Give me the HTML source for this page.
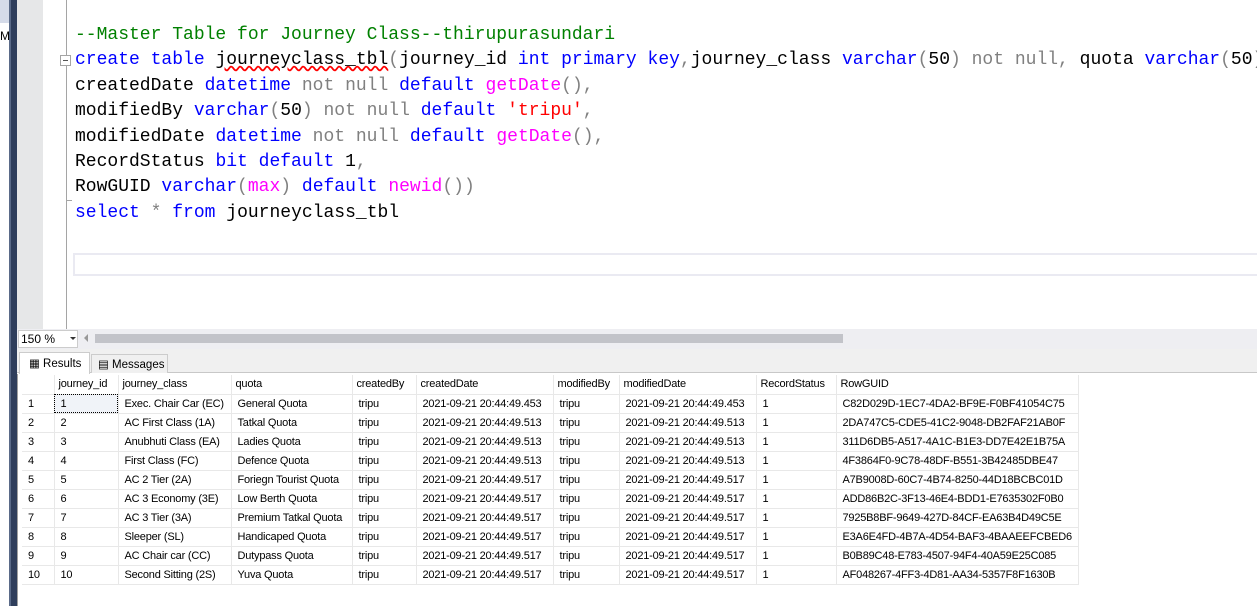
<!DOCTYPE html>
<html><head><style>
*{margin:0;padding:0;box-sizing:border-box}
body{width:1257px;height:606px;overflow:hidden;background:#fff;position:relative;font-family:"Liberation Sans",sans-serif}
.a{position:absolute}
.code{position:absolute;left:75px;font-family:"Liberation Mono",monospace;font-size:18px;white-space:pre;line-height:25.4px}
.k{color:#0000ff}.g{color:#808080}.m{color:#ff00ff}.r{color:#ff0000}.c{color:#008000}
.grid{position:absolute;left:22px;top:375px;border-collapse:collapse;font-size:11px;font-family:"Liberation Sans",sans-serif;letter-spacing:-0.2px}
.grid td{height:19px;border-right:1px solid #e8e8e8;border-bottom:1px solid #e8e8e8;padding:0 0 0 6px;white-space:nowrap;color:#000}
.grid tr:first-child td{padding-left:4px}
</style></head><body>
<div class="a" style="left:0;top:0;width:9px;height:23px;background:#d5dbe9"></div>
<div class="a" style="left:0;top:29px;font-size:12px">M.</div>
<div class="a" style="left:9px;top:0;width:2px;height:606px;background:#5a6a88"></div>
<div class="a" style="left:11px;top:0;width:6px;height:606px;background:#2f3e5c"></div>
<div class="a" style="left:17px;top:0;width:26px;height:329px;background:#e6e7e8"></div>
<div class="a" style="left:66px;top:0;width:1px;height:329px;background:#a5a5a5"></div>
<div class="a" style="left:60px;top:55px;width:11px;height:11px;border:1px solid #a5a5a5;background:#fff"></div>
<div class="a" style="left:63px;top:60px;width:5px;height:1px;background:#555"></div>
<div class="a" style="left:66px;top:200px;width:6px;height:1px;background:#a5a5a5"></div>
<div class="a" style="left:73px;top:253px;width:1190px;height:23px;border:2px solid #eaeaf2;border-right:none"></div>
<div class="code" style="top:23px"><span class="c">--Master Table for Journey Class--thirupurasundari</span>
<span class="k">create table</span> <span style="text-decoration:underline wavy #f00">journeyclass_tbl</span><span class="g">(</span>journey_id <span class="k">int primary key</span><span class="g">,</span>journey_class <span class="k">varchar</span><span class="g">(</span>50<span class="g">) not null,</span> quota <span class="k">varchar</span><span class="g">(</span>50<span class="g">),</span>
createdDate <span class="k">datetime</span> <span class="g">not null</span> <span class="k">default</span> <span class="m">getDate</span><span class="g">(),</span>
modifiedBy <span class="k">varchar</span><span class="g">(</span>50<span class="g">) not null</span> <span class="k">default</span> <span class="r">'tripu'</span><span class="g">,</span>
modifiedDate <span class="k">datetime</span> <span class="g">not null</span> <span class="k">default</span> <span class="m">getDate</span><span class="g">(),</span>
RecordStatus <span class="k">bit default</span> 1<span class="g">,</span>
RowGUID <span class="k">varchar</span><span class="g">(</span><span class="m">max</span><span class="g">)</span> <span class="k">default</span> <span class="m">newid</span><span class="g">())</span>
<span class="k">select</span> <span class="g">*</span> <span class="k">from</span> journeyclass_tbl</div>
<div class="a" style="left:17px;top:329px;width:1240px;height:20px;background:#eeeef2"></div>
<div class="a" style="left:18px;top:330px;width:60px;height:18px;background:#fff;border:1px solid #ccc;font-size:12px;padding:1px 2px">150 %</div>
<div class="a" style="left:70px;top:337px;width:0;height:0;border-left:3px solid transparent;border-right:3px solid transparent;border-top:3px solid #333"></div>
<div class="a" style="left:84px;top:334px;width:0;height:0;border-top:4px solid transparent;border-bottom:4px solid transparent;border-right:4px solid #999"></div>
<div class="a" style="left:95px;top:334px;width:748px;height:9px;background:#c2c3c9"></div>
<div class="a" style="left:17px;top:349px;width:1240px;height:24px;background:#f0f0f0;border-bottom:1px solid #c8c8c8"></div>
<div class="a" style="left:19px;top:352px;width:71px;height:22px;background:#fff;border:1px solid #ccc;border-bottom:none;font-size:11.5px;padding:3px 0 0 9px">▦ Results</div>
<div class="a" style="left:91px;top:354px;width:77px;height:19px;border:1px solid #ccc;border-bottom:none;font-size:11.5px;padding:2px 0 0 6px;background:#f0f0f0">▤ Messages</div>
<div class="a" style="left:17px;top:374px;width:1240px;height:232px;background:#fff;border-left:1px solid #a0a0a0"></div>
<table class="grid">
<tr><td style="width:32px"></td><td style="width:64px">journey_id</td><td style="width:113px">journey_class</td><td style="width:121px">quota</td><td style="width:64px">createdBy</td><td style="width:137px">createdDate</td><td style="width:66px">modifiedBy</td><td style="width:137px">modifiedDate</td><td style="width:80px">RecordStatus</td><td style="width:242px">RowGUID</td></tr>
<tr><td>1</td><td style="outline:1px dotted #000;outline-offset:-1px;background:#f0f3f8">1</td><td>Exec. Chair Car (EC)</td><td>General Quota</td><td>tripu</td><td>2021-09-21 20:44:49.453</td><td>tripu</td><td>2021-09-21 20:44:49.453</td><td>1</td><td>C82D029D-1EC7-4DA2-BF9E-F0BF41054C75</td></tr>
<tr><td>2</td><td>2</td><td>AC First Class (1A)</td><td>Tatkal Quota</td><td>tripu</td><td>2021-09-21 20:44:49.513</td><td>tripu</td><td>2021-09-21 20:44:49.513</td><td>1</td><td>2DA747C5-CDE5-41C2-9048-DB2FAF21AB0F</td></tr>
<tr><td>3</td><td>3</td><td>Anubhuti Class (EA)</td><td>Ladies Quota</td><td>tripu</td><td>2021-09-21 20:44:49.513</td><td>tripu</td><td>2021-09-21 20:44:49.513</td><td>1</td><td>311D6DB5-A517-4A1C-B1E3-DD7E42E1B75A</td></tr>
<tr><td>4</td><td>4</td><td>First Class (FC)</td><td>Defence Quota</td><td>tripu</td><td>2021-09-21 20:44:49.513</td><td>tripu</td><td>2021-09-21 20:44:49.513</td><td>1</td><td>4F3864F0-9C78-48DF-B551-3B42485DBE47</td></tr>
<tr><td>5</td><td>5</td><td>AC 2 Tier (2A)</td><td>Foriegn Tourist Quota</td><td>tripu</td><td>2021-09-21 20:44:49.517</td><td>tripu</td><td>2021-09-21 20:44:49.517</td><td>1</td><td>A7B9008D-60C7-4B74-8250-44D18BCBC01D</td></tr>
<tr><td>6</td><td>6</td><td>AC 3 Economy (3E)</td><td>Low Berth Quota</td><td>tripu</td><td>2021-09-21 20:44:49.517</td><td>tripu</td><td>2021-09-21 20:44:49.517</td><td>1</td><td>ADD86B2C-3F13-46E4-BDD1-E7635302F0B0</td></tr>
<tr><td>7</td><td>7</td><td>AC 3 Tier (3A)</td><td>Premium Tatkal Quota</td><td>tripu</td><td>2021-09-21 20:44:49.517</td><td>tripu</td><td>2021-09-21 20:44:49.517</td><td>1</td><td>7925B8BF-9649-427D-84CF-EA63B4D49C5E</td></tr>
<tr><td>8</td><td>8</td><td>Sleeper (SL)</td><td>Handicaped Quota</td><td>tripu</td><td>2021-09-21 20:44:49.517</td><td>tripu</td><td>2021-09-21 20:44:49.517</td><td>1</td><td>E3A6E4FD-4B7A-4D54-BAF3-4BAAEEFCBED6</td></tr>
<tr><td>9</td><td>9</td><td>AC Chair car (CC)</td><td>Dutypass Quota</td><td>tripu</td><td>2021-09-21 20:44:49.517</td><td>tripu</td><td>2021-09-21 20:44:49.517</td><td>1</td><td>B0B89C48-E783-4507-94F4-40A59E25C085</td></tr>
<tr><td>10</td><td>10</td><td>Second Sitting (2S)</td><td>Yuva Quota</td><td>tripu</td><td>2021-09-21 20:44:49.517</td><td>tripu</td><td>2021-09-21 20:44:49.517</td><td>1</td><td>AF048267-4FF3-4D81-AA34-5357F8F1630B</td></tr>
</table>
</body></html>
